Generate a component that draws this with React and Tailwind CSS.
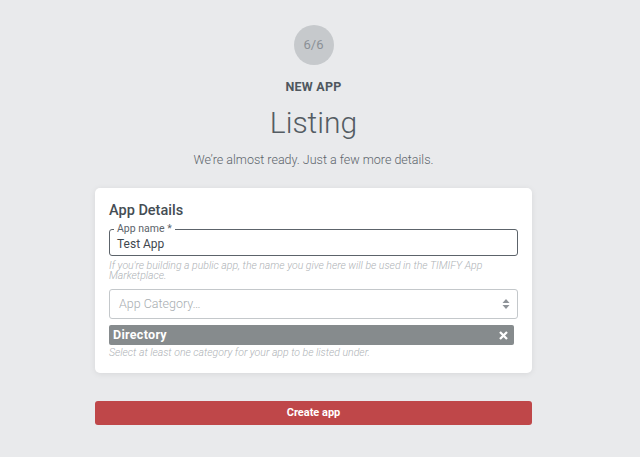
import React from "react";

const App = () => {
  return (
    <div
      className="min-h-[457px] w-full bg-[#e9eaec] text-[#505a62]"
      style={{ fontFamily: 'Roboto, "Noto Sans", sans-serif' }}
    >
      <div className="ml-[95px] flex w-[437px] flex-col items-center pt-[25px]">
        {/* step circle */}
        <div className="flex h-[40px] w-[40px] items-center justify-center rounded-full bg-[#c6c9cc] text-[13px] text-[#8b9096]">
          6/6
        </div>
        <div className="mt-[14px] text-[12.5px] font-bold leading-[16px] tracking-[0.2px] text-[#4f575e]">
          NEW APP
        </div>
        <h1 className="mt-[8px] text-[30px] font-light leading-[40px] text-[#545c63]">
          Listing
        </h1>
        <p className="mt-[8px] text-[12.5px] font-light leading-[18px] text-[#5c646b]">
          We’re almost ready. Just a few more details.
        </p>

        {/* card */}
        <div className="mt-[19px] w-full rounded-[5px] bg-white px-[14px] pb-[14px] pt-[14px] shadow-[0_1px_6px_rgba(0,0,0,0.08)]">
          <h2 className="text-[14.5px] font-medium leading-[18px] text-[#454d54]">
            App Details
          </h2>

          <div className="relative mt-[9px] h-[27px] rounded-[3px] border border-[#5c636a] px-[7px]">
            <span className="absolute left-[4px] top-[-7px] bg-white px-[3px] text-[10.5px] leading-[12px] text-[#5c636a]">
              App name *
            </span>
            <div className="pt-[6px] text-[12px] leading-[16px] text-[#3f474e]">
              Test App
            </div>
          </div>
          <p className="mt-[5px] text-[10.5px] italic font-light leading-[10px] text-[#aeb2b6]">
            If you're building a public app, the name you give here will be used in the TIMIFY App Marketplace.
          </p>

          <div className="mt-[8px] flex h-[30px] items-center justify-between rounded-[3px] border border-[#c4c8cb] pl-[9px] pr-[6px]">
            <span className="text-[12.5px] font-light text-[#a8adb1]">App Category…</span>
            <svg width="10" height="12" viewBox="0 0 10 12">
              <path d="M5 1 L8.5 5 L1.5 5 Z" fill="#8e9398" />
              <path d="M5 11 L8.5 7 L1.5 7 Z" fill="#8e9398" />
            </svg>
          </div>

          <div className="mt-[6px] flex h-[20px] w-[405px] items-center justify-between rounded-[2px] bg-[#868b8d] pl-[4px] pr-[6px]">
            <span className="text-[12.5px] font-bold tracking-[0.3px] text-white">Directory</span>
            <svg width="9" height="9" viewBox="0 0 9 9">
              <path d="M1 1 L8 8 M8 1 L1 8" stroke="white" strokeWidth="2.3" />
            </svg>
          </div>
          <p className="mt-[2px] text-[10.5px] italic font-light leading-[12px] text-[#aeb2b6]">
            Select at least one category for your app to be listed under.
          </p>
        </div>

        <button className="mt-[28px] h-[24px] w-full rounded-[3px] bg-[#bf4749] text-[11px] font-bold text-white">
          Create app
        </button>
      </div>
    </div>
  );
};

export default App;
